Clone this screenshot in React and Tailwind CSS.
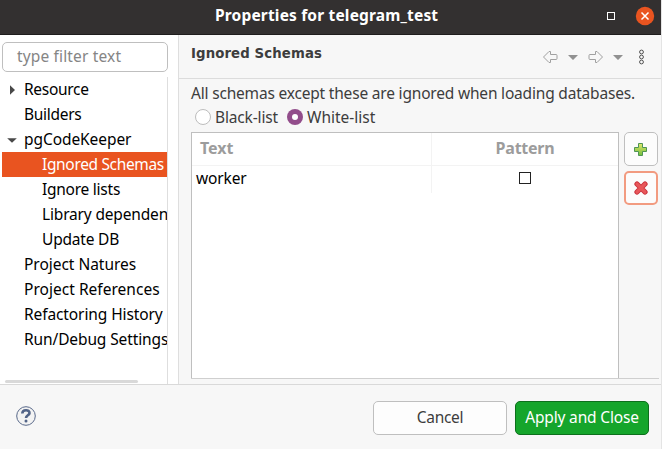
const rows = [
  { label: "Resource", arrow: "right", track: "tracking-[-0.3px]" },
  { label: "Builders", track: "tracking-[-0.3px]" },
  { label: "pgCodeKeeper", arrow: "down", track: "tracking-[-0.07px]" },
  { label: "Ignored Schemas", child: true, selected: true, track: "tracking-[-0.34px]" },
  { label: "Ignore lists", child: true, track: "tracking-[-0.25px]" },
  { label: "Library dependencies", child: true, track: "tracking-[-0.17px]" },
  { label: "Update DB", child: true, track: "tracking-[-0.2px]" },
  { label: "Project Natures", track: "tracking-[-0.03px]" },
  { label: "Project References", track: "tracking-[0.03px]" },
  { label: "Refactoring History", track: "tracking-[-0.1px]" },
  { label: "Run/Debug Settings", track: "tracking-[-0.11px]" },
];

function TreeArrow({ dir }) {
  return (
    <svg width="12" height="12" viewBox="0 0 12 12" fill="#484848">
      {dir === "right" && <path d="M4 1.2 9 6 4 10.8Z" />}
      {dir === "down" && <path d="M1.2 4.2h9.6L6 8.8Z" />}
    </svg>
  );
}

function Tree() {
  return (
    <div className="flex h-[307px] w-[168px] flex-col overflow-hidden border-r border-[#dedede] pl-0.5">
      {rows.map((r) => (
        <div
          key={r.label}
          className={`flex h-[25px] shrink-0 items-center whitespace-nowrap text-[15.5px] ${r.selected ? "bg-[#e95420] text-white" : "text-black"}`}
        >
          <span className="flex w-[22px] shrink-0 pl-1">
            <TreeArrow dir={r.arrow} />
          </span>
          <span className={`${r.track} ${r.child ? "pl-[18px]" : ""}`}>{r.label}</span>
        </div>
      ))}
      <div className="ml-[3px] mt-[28px] h-[3px] w-[133px] shrink-0 rounded-full bg-[#d9d9d9]" />
    </div>
  );
}

function Toolbar() {
  return (
    <svg className="mr-3" width="106" height="20" viewBox="0 0 106 20" fill="none">
      <g stroke="#a0a0a0" strokeLinejoin="round">
        <path d="M.5 10 6 4.5h1.500v3H13q1 0 1 1v3q0 1-1 1H7.500v3H6Z" />
        <path d="M59.500 10 54 4.500h-1.500v3H47q-1 0-1 1v3q0 1 1 1h5.500v3H54Z" />
      </g>
      <path d="M25 8h10l-5 5ZM70 8h10l-5 5Z" fill="#919191" />
      <g stroke="#505050">
        <circle cx="98.500" cy="5" r="1.900" />
        <circle cx="98.500" cy="10" r="1.900" />
        <circle cx="98.500" cy="15" r="1.900" />
      </g>
    </svg>
  );
}

export default function App() {
  return (
    <div className="flex h-[449px] w-[662px] flex-col overflow-hidden border-r border-[#e4e4e4] bg-[#f7f7f7] font-['Noto_Sans',sans-serif] text-[#3d3d3d]">
      <header className="-mr-px flex h-[35px] w-[662px] shrink-0 items-center border-b border-[#1f1d1d] bg-[#333030] text-white">
        <h1 className="ml-[215px] w-[392px] whitespace-nowrap pb-[2px] text-[15.5px] font-bold tracking-[0.17px]">Properties for telegram_test</h1>
        <div className="mt-[-2px] size-2 border border-white" />
        <svg className="ml-[20px] mt-[-2px]" width="20" height="20" viewBox="0 0 20 20">
          <circle cx="10" cy="10" r="9.200" fill="#e95420" />
          <path d="m6.500 6.500 7 7m0-7-7 7" stroke="#fff" strokeWidth="1.500" />
        </svg>
      </header>
      <main className="flex h-[349px] shrink-0">
        <aside className="w-[179px] shrink-0 border-r border-[#dedede] bg-white pt-[7px]">
          <div className="mb-[5px] ml-0.5 flex h-[30px] w-[166px] items-center rounded-[5px] border border-[#bfbfbf] pl-[14px] text-[15.5px] tracking-[0.15px] text-[#858585]">type filter text</div>
          <Tree />
        </aside>
        <section className="flex w-[482px] flex-col">
          <div className="flex h-[44px] shrink-0 items-center justify-between border-b border-[#dcdcdc] pl-3">
            <h2 className="mb-[6px] whitespace-nowrap font-['DejaVu_Sans',sans-serif] text-[13.3px] font-bold tracking-[0.1px] text-[#3d3d3d]">Ignored Schemas</h2>
            <Toolbar />
          </div>
          <p className="ml-3 mt-[2px] h-[25px] whitespace-nowrap text-[15.5px] leading-6 tracking-[-0.19px]">All schemas except these are ignored when loading databases.</p>
          <div className="ml-[16px] flex h-[26px] items-start text-[15.5px] leading-[22px]">
            <span className="mr-1 mt-[3px] size-4 rounded-full border border-[#bdbdbd] bg-white" />
            <span className="w-[72px] tracking-[-0.15px]">Black-list</span>
            <span className="mr-1 mt-[3px] flex size-4 items-center justify-center rounded-full bg-[#924d8b]">
              <span className="size-1.5 rounded-full bg-white" />
            </span>
            <span>White-list</span>
          </div>
          <div className="ml-3 flex h-[247px] w-[468px] border-b border-[#cfcfcf]">
            <div className="w-[428px] border-x border-t border-[#bfbfbf] bg-white">
              <div className="flex h-[33px] border-b border-[#f3f3f3] text-[16px] font-bold leading-[31px] text-[#9c9c9c]">
                <span className="w-[240px] border-r border-[#f3f3f3] pl-2">Text</span>
                <span className="flex-1 text-center tracking-[-0.25px]">Pattern</span>
              </div>
              <div className="flex h-[27px] text-[15.5px] leading-[25px] text-black">
                <span className="w-[240px] border-r border-[#f3f3f3] pl-1 tracking-[-0.15px]">worker</span>
                <span className="flex flex-1 justify-center pt-[6px]">
                  <span className="size-3 border border-[#222]" />
                </span>
              </div>
            </div>
            <div className="ml-[5px] flex flex-col gap-[5px]">
              <button className="flex size-[34px] items-center justify-center rounded-[5px] border border-[#bfbfbf] bg-[#fcfcfc]">
                <svg className="mr-px" width="13" height="13" viewBox="0 0 13 13">
                  <defs>
                    <linearGradient id="plus" x2="0" y2="1">
                      <stop stopColor="#e2e76c" />
                      <stop offset="1" stopColor="#72bd3c" />
                    </linearGradient>
                  </defs>
                  <path d="M4.500.5h4v4h4v4h-4v4h-4v-4h-4v-4h4Z" fill="url(#plus)" stroke="#4e9554" />
                </svg>
              </button>
              <button className="flex size-[34px] items-center justify-center rounded-[5px] border-2 border-[#f29b80] bg-[#fcfcfc]">
                <svg width="14" height="14" viewBox="0 0 14 14">
                  <path d="m3 3 8 8m0-8-8 8" stroke="#c9303a" strokeWidth="5.200" strokeLinecap="round" />
                  <path d="m3 3 8 8m0-8-8 8" stroke="#e8575a" strokeWidth="3.200" strokeLinecap="round" />
                </svg>
              </button>
            </div>
          </div>
        </section>
      </main>
      <footer className="flex h-[65px] shrink-0 items-start border-t border-[#d9d9d9] pt-4 text-[15.5px]">
        <svg className="ml-4 mt-[5px]" width="20" height="20" viewBox="0 0 20 20" fill="none">
          <circle cx="10" cy="10" r="9.300" fill="#f3f3f3" stroke="#59698a" />
          <path d="M6.300 7.600c0-4.400 7.400-4.400 7.200-.5-.1 2.300-3.500 2.200-3.500 5" stroke="#526487" strokeWidth="2.600" />
          <circle cx="10" cy="15" r="1.500" fill="#526487" />
        </svg>
        <button className="ml-[337px] h-[34px] w-[134px] rounded-[5px] border border-[#bfbfbf] bg-[#fdfdfd] tracking-[-0.3px]">Cancel</button>
        <button className="ml-2 h-[34px] w-[134px] whitespace-nowrap rounded-[5px] border border-[#0d6f1c] bg-[#15a52b] tracking-[-0.17px] text-white">Apply and Close</button>
      </footer>
    </div>
  );
}
